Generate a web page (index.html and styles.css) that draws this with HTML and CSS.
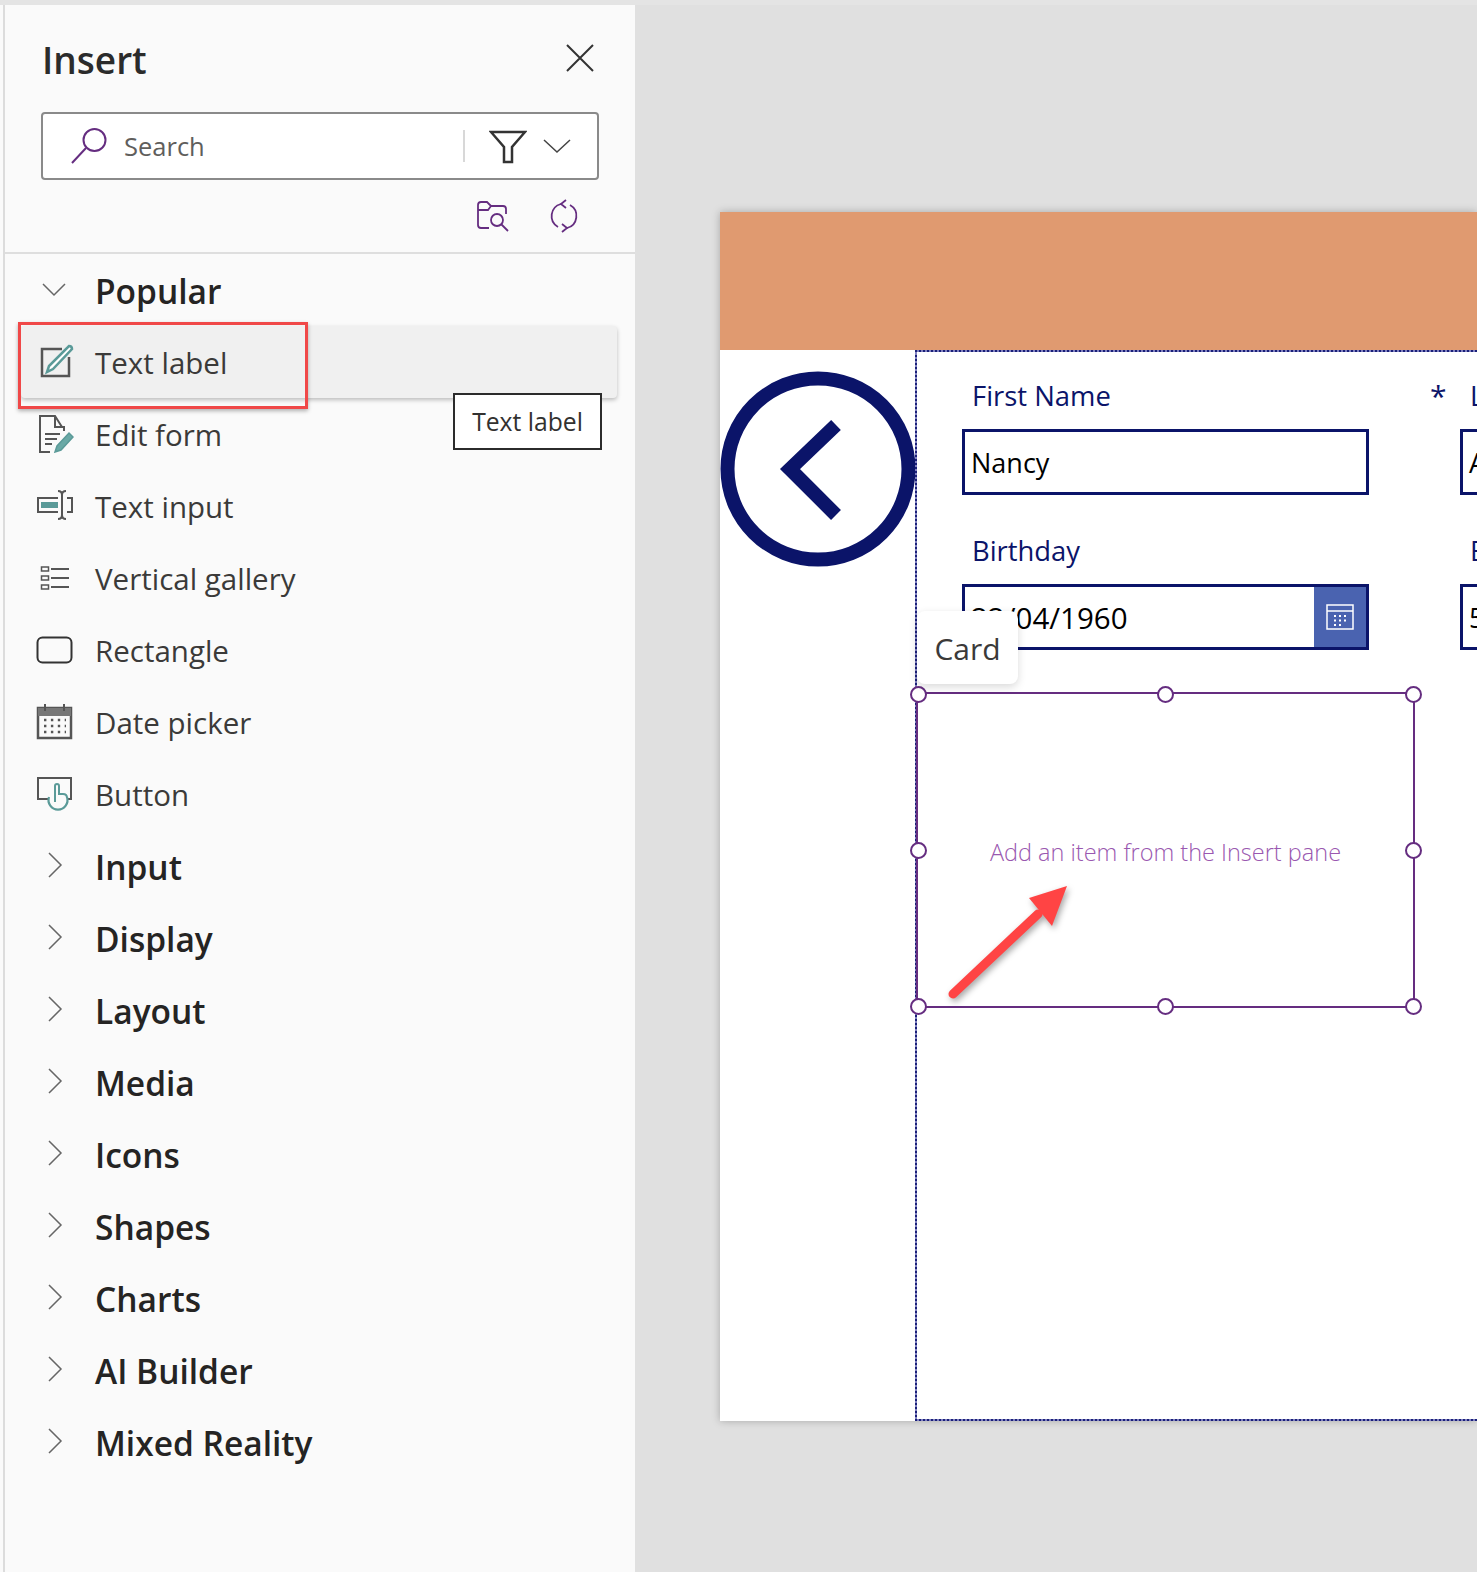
FILE: index.html
```html
<!DOCTYPE html>
<html lang="en">
<head>
    <meta charset="UTF-8">
    <title>Insert</title>
    <link rel="stylesheet" href="styles.css">
</head>
<body>
<div class="page">
    <!-- Insert pane -->
    <aside class="pane">
        <div class="pane-head">
            <h1 class="pane-title">Insert</h1>
            <svg class="close-icon" width="30" height="30" viewBox="0 0 30 30"><path d="M2 2 L28 28 M28 2 L2 28" stroke="#333" stroke-width="2" fill="none"/></svg>
        </div>
        <div class="search-box">
            <svg class="search-icon" width="38" height="38" viewBox="0 0 38 38"><circle cx="24.500" cy="13" r="11" stroke="#652d80" stroke-width="2" fill="none"/><path d="M16 21 L2 36" stroke="#652d80" stroke-width="2" fill="none"/></svg>
            <span class="search-text">Search</span>
            <span class="search-sep"></span>
            <svg class="filter-icon" width="38" height="36" viewBox="0 0 38 36"><path d="M2 4 H36 L23 19 V34 H15 V19 Z" stroke="#333" stroke-width="2.500" fill="none"/></svg>
            <svg class="filter-chevron" width="28" height="16" viewBox="0 0 28 16"><path d="M1 2 L14 14 L27 2" stroke="#444" stroke-width="1.500" fill="none"/></svg>
        </div>
        <div class="tool-row">
            <svg width="34" height="32" viewBox="0 0 34 32"><path d="M13 28 H5 Q2 28 2 25 V5 Q2 2 5 2 H11 L15 6 H27 Q30 6 30 9 V14 M2 10 H12 L15 6" stroke="#652d80" stroke-width="1.800" fill="none"/><circle cx="21" cy="20" r="6" stroke="#652d80" stroke-width="1.800" fill="none"/><path d="M25 24 L32 31" stroke="#652d80" stroke-width="1.800"/></svg>
            <svg width="30" height="34" viewBox="0 0 30 34"><path d="M9 28 A12.500 12.500 0 0 1 12 5 M21 6 A12.500 12.500 0 0 1 18 29" stroke="#652d80" stroke-width="1.800" fill="none"/><path d="M17 1 L12 5 L17 9 M13 25 L18 29 L13 33" stroke="#652d80" stroke-width="1.800" fill="none"/></svg>
        </div>

        <div class="list">
            <div class="row group-row">
                <svg class="row-icon" width="38" height="38" viewBox="0 0 38 38"><path d="M7 13 L18 24 L29 13" stroke="#666" stroke-width="1.500" fill="none"/></svg>
                <span>Popular</span>
            </div>
            <div class="row item-row is-hover">
                <svg class="row-icon" width="38" height="38" viewBox="0 0 38 38"><path d="M26 6 H6 V33 H33 V14" stroke="#555" stroke-width="2.500" fill="none"/><path d="M33 3 Q36 3 36 6 L17 26 L11 29 L13 23 Z" stroke="#5a9a98" stroke-width="2.500" fill="#fff"/></svg>
                <span>Text label</span>
            </div>
            <div class="row item-row">
                <svg class="row-icon" width="38" height="38" viewBox="0 0 38 38"><path d="M26 12 L19 1 H4 V37 H14 M19 1 V12 H28 V16" stroke="#555" stroke-width="2" fill="none"/><path d="M9 19 H24 M9 24 H21 M9 29 H16" stroke="#555" stroke-width="1.800"/><path d="M33 18 L37 22 L25 35 L19 37 L21 31 Z" stroke="#5a9a98" stroke-width="1.500" fill="#6aa9a6"/></svg>
                <span>Edit form</span>
            </div>
            <div class="row item-row">
                <svg class="row-icon" width="38" height="38" viewBox="0 0 38 38"><path d="M22 11 H2 V25 H22 M31 11 H36 V25 H31 M22 4 Q26 4 26 8 V28 Q26 32 22 32 M30 4 Q26 4 26 8 M30 32 Q26 32 26 28" stroke="#555" stroke-width="2" fill="none"/><rect x="5" y="15" width="17" height="6" fill="#5a9a98"/></svg>
                <span>Text input</span>
            </div>
            <div class="row item-row">
                <svg class="row-icon" width="38" height="38" viewBox="0 0 38 38"><path d="M15 10 H33 M15 19 H33 M15 28 H33" stroke="#555" stroke-width="2"/><rect x="5.500" y="8" width="7" height="4" stroke="#555" stroke-width="1.500" fill="none"/><rect x="5.500" y="17" width="7" height="4" stroke="#555" stroke-width="1.500" fill="none"/><rect x="5.500" y="26" width="7" height="4" stroke="#555" stroke-width="1.500" fill="none"/></svg>
                <span>Vertical gallery</span>
            </div>
            <div class="row item-row">
                <svg class="row-icon" width="38" height="38" viewBox="0 0 38 38"><rect x="1.500" y="6.500" width="34" height="25" rx="5" stroke="#333" stroke-width="2" fill="none"/></svg>
                <span>Rectangle</span>
            </div>
            <div class="row item-row">
                <svg class="row-icon" width="38" height="38" viewBox="0 0 38 38"><rect x="2" y="5" width="33" height="30" stroke="#555" stroke-width="2.500" fill="none"/><rect x="2" y="5" width="33" height="8" fill="#777"/><path d="M9 1 V8 M28 1 V8" stroke="#555" stroke-width="2"/><path d="M8 17 H30 M8 23 H30 M8 29 H30" stroke="#555" stroke-width="2.400" stroke-dasharray="2.400 4.500"/></svg>
                <span>Date picker</span>
            </div>
            <div class="row item-row">
                <svg class="row-icon" width="38" height="38" viewBox="0 0 38 38"><path d="M13 24 H2 V3 H35 V24 H31" stroke="#555" stroke-width="2" fill="none"/><path d="M13 22 A9.500 9.500 0 1 0 31 22" stroke="#5a9a98" stroke-width="2.200" fill="none"/><path d="M19 27 V11 Q19 9 21 9 Q23 9 23 11 V19 H27 Q31 19 31 23" stroke="#5a9a98" stroke-width="2" fill="none"/></svg>
                <span>Button</span>
            </div>
            <div class="row group-row">
                <svg class="row-icon" width="38" height="38" viewBox="0 0 38 38"><use href="#chev"/></svg>
                <span>Input</span>
            </div>
            <div class="row group-row">
                <svg class="row-icon" width="38" height="38" viewBox="0 0 38 38"><use href="#chev"/></svg>
                <span>Display</span>
            </div>
            <div class="row group-row">
                <svg class="row-icon" width="38" height="38" viewBox="0 0 38 38"><use href="#chev"/></svg>
                <span>Layout</span>
            </div>
            <div class="row group-row">
                <svg class="row-icon" width="38" height="38" viewBox="0 0 38 38"><use href="#chev"/></svg>
                <span>Media</span>
            </div>
            <div class="row group-row">
                <svg class="row-icon" width="38" height="38" viewBox="0 0 38 38"><use href="#chev"/></svg>
                <span>Icons</span>
            </div>
            <div class="row group-row">
                <svg class="row-icon" width="38" height="38" viewBox="0 0 38 38"><use href="#chev"/></svg>
                <span>Shapes</span>
            </div>
            <div class="row group-row">
                <svg class="row-icon" width="38" height="38" viewBox="0 0 38 38"><use href="#chev"/></svg>
                <span>Charts</span>
            </div>
            <div class="row group-row">
                <svg class="row-icon" width="38" height="38" viewBox="0 0 38 38"><use href="#chev"/></svg>
                <span>AI Builder</span>
            </div>
            <div class="row group-row">
                <svg class="row-icon" width="38" height="38" viewBox="0 0 38 38"><use href="#chev"/></svg>
                <span>Mixed Reality</span>
            </div>
        </div>

        <!-- annotation and tooltip sit over the list -->
        <div class="red-box"></div>
        <div class="tooltip">Text label</div>
    </aside>

    <!-- Canvas -->
    <main class="canvas">
        <div class="screen">
            <div class="screen-header"></div>
            <div class="screen-body">
                <div class="back-col">
                    <svg width="196" height="196" viewBox="0 0 196 196"><circle cx="98" cy="98" r="90.500" stroke="#0b1469" stroke-width="14" fill="none"/><path d="M116 54 L70 98 L116 144" stroke="#0b1469" stroke-width="14" fill="none"/></svg>
                </div>
                <div class="form">
                    <div class="fields">
                        <div class="field">
                            <div class="field-label">First Name</div>
                            <div class="field-input">Nancy</div>
                            <span class="star">*</span>
                        </div>
                        <div class="field">
                            <div class="field-label">Last Name</div>
                            <div class="field-input">Anderson</div>
                        </div>
                        <div class="field">
                            <div class="field-label">Birthday</div>
                            <div class="field-input date-input">
                                <span>22/04/1960</span>
                                <span class="cal-btn">
                                    <svg width="28" height="26" viewBox="0 0 28 26"><rect x="1" y="1" width="26" height="24" stroke="#fff" stroke-width="1.500" fill="none"/><path d="M1 7 H27" stroke="#fff" stroke-width="1.500"/><path d="M8 12 H22 M8 16.500 H22 M8 21 H18" stroke="#fff" stroke-width="2" stroke-dasharray="2 3"/></svg>
                                </span>
                            </div>
                        </div>
                        <div class="field">
                            <div class="field-label">Email</div>
                            <div class="field-input">5551234</div>
                        </div>
                    </div>
                    <div class="card-wrap">
                        <div class="card-tag">Card</div>
                        <div class="card">
                            <span class="card-hint">Add an item from the Insert pane</span>
                            <i class="handle h-tl"></i><i class="handle h-tc"></i><i class="handle h-tr"></i>
                            <i class="handle h-ml"></i><i class="handle h-mr"></i>
                            <i class="handle h-bl"></i><i class="handle h-bc"></i><i class="handle h-br"></i>
                            <svg class="arrow" width="130" height="125" viewBox="0 0 130 125"><path d="M7 112 L92 32" stroke="#ff4444" stroke-width="9" stroke-linecap="round" fill="none"/><path d="M121 4 L83 16 L106 44 Z" fill="#ff4444"/></svg>
                        </div>
                    </div>
                </div>
            </div>
        </div>
    </main>
</div>

<svg width="0" height="0" class="defs"><defs><path id="chev" d="M13 6 L25 18 L13 30" stroke="#666" stroke-width="1.500" fill="none"/></defs></svg>
</body>
</html>
```

FILE: styles.css
```css
body {
    margin: 0;
    background: #fafafa;
    font-family: "Open Sans", "Noto Sans", sans-serif;
    color: #323130;
}

.page {
    display: flex;
    height: 1572px;
    overflow: hidden;
    border-top: 5px solid #e4e4e4;
    box-sizing: border-box;
}

.defs {
    position: absolute;
}

/* Insert pane */
.pane {
    position: relative;
    width: 630px;
    margin-left: 3px;
    flex: none;
    border-left: 2px solid #dcdcdc;
    background: #fafafa;
}

.pane-head {
    display: flex;
    justify-content: space-between;
    align-items: center;
    padding: 31px 40px 0 37px;
    height: 48px;
}

.pane-title {
    margin: 0;
    font-size: 37px;
    font-weight: 600;
    line-height: 48px;
    color: #2b2b2b;
}

.close-icon {
    margin-top: -4px;
}

.search-box {
    display: flex;
    align-items: center;
    box-sizing: border-box;
    width: 558px;
    height: 68px;
    margin: 28px 0 0 36px;
    padding-left: 27px;
    background: #fff;
    border: 2px solid #8a8a8a;
    border-radius: 4px;
}

.search-text {
    flex: 1;
    margin-left: 16px;
    font-size: 25.500px;
    color: #605e5c;
}

.search-sep {
    width: 2px;
    height: 32px;
    background: #d8d8d8;
}

.filter-icon {
    margin-left: 24px;
}

.filter-chevron {
    margin: 0 26px 0 16px;
}

.tool-row {
    display: flex;
    justify-content: flex-end;
    align-items: center;
    gap: 39px;
    height: 72px;
    padding-right: 56px;
    border-bottom: 2px solid #dedede;
}

.list {
    display: flex;
    flex-direction: column;
}

.row {
    display: flex;
    align-items: center;
    height: 72px;
    padding-left: 31px;
    gap: 21px;
}

.row-icon {
    flex: none;
}

.group-row {
    font-size: 33.500px;
    font-weight: 600;
    color: #252423;
}

.group-row span {
    padding-top: 2px;
}

.item-row {
    font-size: 29.500px;
    color: #3b3a39;
}

.is-hover {
    margin: 0 18px 0 16px;
    padding-left: 15px;
    background: #f0f0f0;
    border-radius: 4px;
    box-shadow: 0 2px 4px rgba(0, 0, 0, 0.25);
}

.red-box {
    position: absolute;
    left: 13px;
    top: 317px;
    width: 290px;
    height: 87px;
    box-sizing: border-box;
    border: 3px solid #f04848;
    box-shadow: 0 2px 4px rgba(0, 0, 0, 0.3);
}

.tooltip {
    position: absolute;
    left: 448px;
    top: 388px;
    box-sizing: border-box;
    width: 149px;
    height: 57px;
    background: #fff;
    border: 2px solid #2b2b2b;
    font-size: 24.700px;
    line-height: 53px;
    text-align: center;
}

/* Canvas */
.canvas {
    flex: 1;
    min-width: 0;
    padding: 207px 0 0 85px;
    background: #e0e0e0;
}

.screen {
    height: 1209px;
    background: #fff;
    box-shadow: 0 0 8px rgba(0, 0, 0, 0.25);
}

.screen-header {
    height: 138px;
    background: #e09a70;
}

.screen-body {
    display: flex;
    height: 1071px;
}

.back-col {
    width: 195px;
    flex: none;
    padding-top: 21px;
}

.form {
    flex: 1;
    min-width: 0;
    box-sizing: border-box;
    border: 2px dotted #1a2078;
    border-right: none;
    background: linear-gradient(#fff, #fff) padding-box, #8080c0 border-box;
    padding-left: 45px;
}

.fields {
    display: grid;
    grid-template-columns: 407px 407px;
    column-gap: 91px;
    row-gap: 37px;
    padding-top: 25px;
}

.field {
    position: relative;
}

.field-label {
    height: 52px;
    line-height: 38px;
    padding-left: 10px;
    font-size: 27.400px;
    color: #0b1469;
    white-space: nowrap;
}

.field-input {
    display: flex;
    align-items: center;
    box-sizing: border-box;
    height: 66px;
    padding-left: 6px;
    background: #fff;
    border: 3px solid #0b1469;
    font-size: 27px;
    color: #000;
    white-space: nowrap;
    overflow: hidden;
}

.date-input {
    justify-content: space-between;
    font-size: 29.500px;
}

.cal-btn {
    display: flex;
    align-items: center;
    justify-content: center;
    width: 52px;
    height: 100%;
    background: #4a63b0;
}

.star {
    position: absolute;
    left: 468px;
    top: -2px;
    font-size: 30px;
    color: #0b1469;
}

.card-wrap {
    position: relative;
    margin: 42px 0 0 -46px;
}

.card-tag {
    position: absolute;
    left: 1px;
    top: -81px;
    z-index: 2;
    box-sizing: border-box;
    width: 101px;
    height: 73px;
    background: #fff;
    border-radius: 8px;
    box-shadow: 0 3px 8px rgba(0, 0, 0, 0.15);
    font-size: 30px;
    line-height: 75px;
    text-align: center;
    color: #3b3a39;
}

.card {
    position: relative;
    display: flex;
    align-items: center;
    justify-content: center;
    box-sizing: border-box;
    width: 499px;
    height: 316px;
    border: 2px solid #652d80;
}

.card-hint {
    padding-top: 4px;
    font-size: 23.500px;
    font-weight: 300;
    color: #9a58b0;
    white-space: nowrap;
}

.handle {
    position: absolute;
    width: 17px;
    height: 17px;
    box-sizing: border-box;
    margin: -8.500px 0 0 -8.500px;
    background: #fff;
    border: 2px solid #652d80;
    border-radius: 50%;
}

.h-tl { left: 0; top: 0; }
.h-tc { left: 50%; top: 0; }
.h-tr { left: 100%; top: 0; }
.h-ml { left: 0; top: 50%; }
.h-mr { left: 100%; top: 50%; }
.h-bl { left: 0; top: 100%; }
.h-bc { left: 50%; top: 100%; }
.h-br { left: 100%; top: 100%; }

.arrow {
    position: absolute;
    left: 28px;
    top: 188px;
    filter: drop-shadow(2px 3px 3px rgba(0, 0, 0, 0.35));
}
```
